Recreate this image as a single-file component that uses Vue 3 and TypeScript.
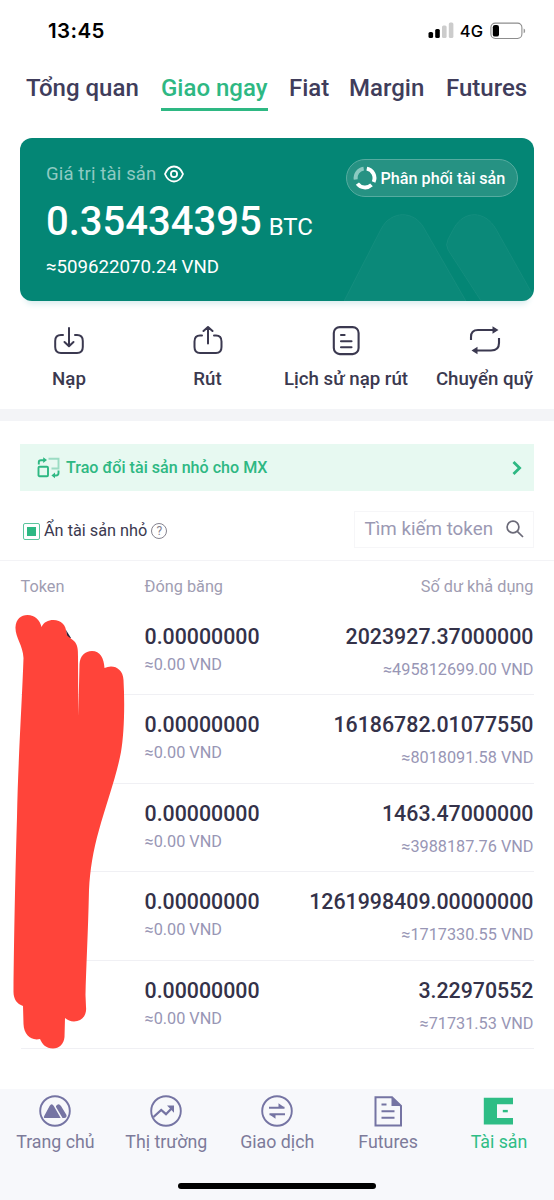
<script setup lang="ts">
interface Tab { label: string; cls: string; active?: boolean }
interface Holding { frozen: string; frozenFiat: string; available: string; availableFiat: string }

const tabs: Tab[] = [
  { label: 'Tổng quan', cls: 't1' },
  { label: 'Giao ngay', cls: 't2', active: true },
  { label: 'Fiat', cls: 't3' },
  { label: 'Margin', cls: 't4' },
  { label: 'Futures', cls: 't5' },
]

const holdings: Holding[] = [
  { frozen: '0.00000000', frozenFiat: '≈0.00 VND', available: '2023927.37000000', availableFiat: '≈495812699.00 VND' },
  { frozen: '0.00000000', frozenFiat: '≈0.00 VND', available: '16186782.01077550', availableFiat: '≈8018091.58 VND' },
  { frozen: '0.00000000', frozenFiat: '≈0.00 VND', available: '1463.47000000', availableFiat: '≈3988187.76 VND' },
  { frozen: '0.00000000', frozenFiat: '≈0.00 VND', available: '1261998409.00000000', availableFiat: '≈1717330.55 VND' },
  { frozen: '0.00000000', frozenFiat: '≈0.00 VND', available: '3.22970552', availableFiat: '≈71731.53 VND' },
]
</script>

<template>
  <main class="screen">
    <header class="status">
      <span class="time">13:45</span>
      <div class="status-right">
        <svg class="signal" width="26" height="17" viewBox="0 0 26 17">
          <rect x="0.5" y="10" width="4.6" height="6" rx="1.6" fill="#000" />
          <rect x="7.2" y="7" width="4.6" height="9" rx="1.5" fill="#000" />
          <rect x="14" y="3.6" width="4.6" height="12.4" rx="1.5" fill="#ccc" />
          <rect x="20.8" y="0.5" width="4.6" height="15.5" rx="1.5" fill="#ccc" />
        </svg>
        <span class="network">4G</span>
        <svg class="battery" width="36" height="18" viewBox="0 0 36 18">
          <rect x="0.9" y="1.1" width="31" height="15.4" rx="4.4" fill="none" stroke="#8d8d8d" stroke-width="1.1" />
          <rect x="2.8" y="3" width="6.2" height="11.6" rx="2.2" fill="#000" />
          <path d="M33.6 6.6v4.6q1.6-.5 1.6-2.3t-1.6-2.3z" fill="#999" />
        </svg>
      </div>
    </header>

    <nav class="tabs">
      <span v-for="tab in tabs" :key="tab.label" class="tab" :class="[tab.cls, { active: tab.active }]">{{ tab.label }}</span>
    </nav>

    <section class="card">
      <svg class="card-art" width="190" height="90" viewBox="0 0 190 90">
        <path d="M0 90 L37 18 C47 -1 70 -1 80 17 L122 90 Z" fill="#fff" fill-opacity=".03" stroke="#fff" stroke-opacity=".05" />
        <path d="M137 90 L104 39 Q101 34 104 28 L110 17 C120 -1 141 -1 152 18 L189 84 L186 90 Z" fill="#fff" fill-opacity=".03" stroke="#fff" stroke-opacity=".05" />
      </svg>
      <div class="card-info">
        <div class="card-label">
          <span>Giá trị tài sản</span>
          <svg width="20" height="18" viewBox="0 0 20 18" fill="none" stroke="#fff" stroke-width="1.8">
            <path d="M1 9C3 4 6.300 1.500 10 1.500S17 4 19 9C17 14 13.700 16.500 10 16.500S3 14 1 9Z" stroke-linejoin="round" />
            <circle cx="10" cy="9" r="3.100" />
          </svg>
        </div>
        <div class="balance"><span class="amount">0.35434395</span><span class="unit">BTC</span></div>
        <div class="fiat">≈509622070.24 VND</div>
      </div>
      <div class="distribution">
        <svg width="24" height="24" viewBox="0 0 24 24" fill="none" stroke-width="3.900">
          <path d="M13.800 2.700A9.500 9.500 0 0 1 20.600 16" stroke="#fff" />
          <path d="M18.500 18.900A9.500 9.500 0 0 1 4.400 17.600" stroke="#fff" />
          <path d="M2.700 13.500A9.500 9.500 0 0 1 10.700 2.600" stroke="#8bcac1" />
        </svg>
        <span>Phân phối tài sản</span>
      </div>
    </section>

    <section class="actions">
      <div class="action a1">
        <svg width="32" height="32" viewBox="0 0 32 32" fill="none" stroke="#3b3950" stroke-width="2" stroke-linecap="round" stroke-linejoin="round">
          <path d="M10 9H8Q2.200 9 2.200 15V21Q2.200 27 8 27H24Q29.800 27 29.800 21V15Q29.800 9 24 9H22M16 2V20M11.500 16L16 20.200L20.500 16" />
        </svg>
        <span>Nạp</span>
      </div>
      <div class="action a2">
        <svg width="32" height="32" viewBox="0 0 32 32" fill="none" stroke="#3b3950" stroke-width="2" stroke-linecap="round" stroke-linejoin="round">
          <path d="M10 9.500H8Q2.500 9.500 2.500 15.500V21Q2.500 27 8 27H24Q29.500 27 29.500 21V15.500Q29.500 9.500 24 9.500H22M16 17.500V1M11.500 5L16 1L20.500 5" />
        </svg>
        <span>Rút</span>
      </div>
      <div class="action a3">
        <svg width="32" height="32" viewBox="0 0 32 32" fill="none" stroke="#3b3950" stroke-width="2.100" stroke-linecap="round">
          <rect x="3.800" y="1.100" width="24.800" height="27" rx="6" />
          <path d="M11 9H14.600M11 15.200H21.500M11 21.200H21.500" />
        </svg>
        <span>Lịch sử nạp rút</span>
      </div>
      <div class="action a4">
        <svg width="32" height="32" viewBox="0 0 32 32" fill="none" stroke="#3b3950" stroke-width="2.100">
          <path d="M2 14V11Q2 4 9 4H24M30 12V17Q30 24.500 22 24.500H8" />
          <path d="M23.500 .300L29.500 4L23.500 7.700ZM8.500 20.800L2.500 24.500L8.500 28.200Z" fill="#3b3950" stroke="none" />
        </svg>
        <span>Chuyển quỹ</span>
      </div>
    </section>

    <section class="body">
      <div class="promo">
        <svg width="24" height="22" viewBox="0 0 24 22" fill="none" stroke="#2eb883" stroke-width="1.900">
          <rect x="1.500" y="9.700" width="9.500" height="9.500" rx="1" />
          <path d="M11.500 1.800H21.500V11.500H14.500" stroke="#9bdcc3" />
          <path d="M1.800 7.500V5Q1.800 3.200 4 3.200H7M21.500 13.500V16Q21.500 18.500 19 18.500H17.500" />
          <path d="M6.200 .300L10 3.100L6.200 6ZM18 15.600L14.400 18.400L18 21.200Z" fill="#2eb883" stroke="none" />
        </svg>
        <span class="promo-text">Trao đổi tài sản nhỏ cho MX</span>
        <svg class="chevron" width="12" height="16" viewBox="0 0 12 16" fill="none" stroke="#2eb883" stroke-width="2.800">
          <path d="M2.500 2L8.600 8L2.500 14" />
        </svg>
      </div>

      <div class="filters">
        <div class="hide-small">
          <span class="checkbox"></span>
          <span class="hide-label">Ẩn tài sản nhỏ</span>
          <span class="help">?</span>
        </div>
        <div class="search">
          <span>Tìm kiếm token</span>
          <svg width="18" height="18" viewBox="0 0 18 18" fill="none" stroke="#6b6a78" stroke-width="1.700">
            <circle cx="7" cy="7" r="5.900" />
            <path d="M11.300 11.300L17 17" />
          </svg>
        </div>
      </div>
    </section>

    <section class="table">
      <div class="grid head">
        <span>Token</span>
        <span>Đóng băng</span>
        <span class="right">Số dư khả dụng</span>
      </div>
      <div v-for="(row, i) in holdings" :key="i" class="grid row">
        <span></span>
        <div>
          <div class="value">{{ row.frozen }}</div>
          <div class="sub">{{ row.frozenFiat }}</div>
        </div>
        <div class="right">
          <div class="value">{{ row.available }}</div>
          <div class="sub low">{{ row.availableFiat }}</div>
        </div>
      </div>
      <svg class="scribble" width="130" height="440" viewBox="0 610 130 440">
        <path d="M66 630L71 638L67 639Z" fill="#26243c" />
        <path
          fill="#ff443a"
          d="M15.500 627C16 619 21 615 27.500 615C35 615 40 620 41.500 627C44 622 48 620 53.500 620C61 620 66 625 66.500 633C67 637 70 637 74 641C78 645 78 650 78 657L78.300 716L79.500 664C80 656 85 651 92 651C100 651 104 658 104.500 668C113 664 123 668 123.500 680C125 706 124 735 121 752C117 774 106 805 99 830C93 851 90 870 89 890C88 935 86 970 85.500 995L86 1007C87 1015 82 1021.500 74 1021.500C70 1021.500 68 1020 65 1018L64.500 1037C64 1044 59 1048.500 53 1048.500C46 1048.500 42 1044 40 1039C31 1041 24 1035 23.500 1024L23 1006C17 1004 13.500 999 13.500 992C14 936 15.500 866 17 817C18 762 22 702 23.500 658C23 645 15 637 15.500 627Z"
        />
      </svg>
    </section>

    <footer class="bottom">
      <div class="items">
        <div class="item">
          <svg width="34" height="34" viewBox="0 0 34 34">
            <circle cx="17" cy="17" r="14.800" fill="none" stroke="#7574a3" stroke-width="1.900" />
            <path d="M7 24Q5.200 24 6.200 22L11.600 12Q13.700 8.500 15.800 12L22.700 24ZM18 12Q20.500 8.500 23 12L28.500 21Q29 24 26.200 24H24.500L18 13Z" fill="#7574a3" />
          </svg>
          <span>Trang chủ</span>
        </div>
        <div class="item">
          <svg width="34" height="34" viewBox="0 0 34 34" fill="none" stroke="#7574a3">
            <circle cx="17" cy="17" r="14.800" stroke-width="1.900" />
            <path d="M4.500 23L12.200 16L17 20.200L23 14" stroke-width="2.300" />
            <path d="M18 11.500H25V18.800Z" fill="#7574a3" stroke="none" />
          </svg>
          <span>Thị trường</span>
        </div>
        <div class="item">
          <svg width="34" height="34" viewBox="0 0 34 34" fill="none" stroke="#7574a3" stroke-width="1.900">
            <circle cx="17" cy="17" r="14.800" />
            <path d="M9 13.700H24.500M9.500 20.300H25" />
            <path d="M18.500 9.300V13.500H24.500ZM15.500 24.700V20.500H9.500Z" fill="#7574a3" stroke="none" />
          </svg>
          <span>Giao dịch</span>
        </div>
        <div class="item">
          <svg width="34" height="34" viewBox="0 0 34 34" fill="none" stroke="#7574a3" stroke-width="2">
            <path d="M4.500 3.200H21L30 12V31.500H4.500Z" />
            <path d="M20.500 3V12H30Z" fill="#7574a3" stroke="none" />
            <path d="M10.500 10.500H15.500M10.500 17.200H23.500M10.500 23.700H23.500" />
          </svg>
          <span>Futures</span>
        </div>
        <div class="item on">
          <svg width="34" height="34" viewBox="0 0 34 34" fill="#2ebd85">
            <path d="M1.800 3.800H31V10.300H15V23.900H31V30.500H1.800Z" />
            <rect x="20.800" y="15.900" width="5" height="2.400" />
          </svg>
          <span>Tài sản</span>
        </div>
      </div>
      <div class="home-bar"></div>
    </footer>
  </main>
</template>

<style>
body { margin: 0; background: #fff; }
</style>

<style scoped>
* { box-sizing: border-box; }
.screen { width: 554px; height: 1200px; background: #fff; font-family: Roboto, "Noto Sans", sans-serif; color: #3b394f; display: flex; flex-direction: column; overflow: hidden; white-space: nowrap; }
svg { display: block; flex: none; }
.status { height: 61px; flex: none; display: flex; justify-content: space-between; padding: 0 28px 0 48px; align-items: center; color: #000; }
.time { font: 600 20.500px/24px Inter, sans-serif; letter-spacing: .4px; }
.status-right { display: flex; align-items: center; }
.network { font: 500 16.500px/20px Inter, sans-serif; margin: 0 7px 0 6px; }
.tabs { height: 77px; flex: none; padding: 12px 0 0 26px; display: flex; align-items: flex-start; font-weight: 500; font-size: 24px; line-height: 30px; color: #403d5b; }
.tab { height: 37px; flex: none; }
.t1 { width: 135px; }
.t2 { width: 107px; margin-right: 21px; }
.t3 { width: 60px; }
.t4 { width: 97px; }
.tab.active { color: #2eb883; border-bottom: 3px solid #2eb883; height: 38px; }
.card { position: relative; margin: 0 20px; width: 513.500px; height: 163px; flex: none; border-radius: 12px; background: #048675; color: #fff; box-shadow: 0 8px 6px -5px #d9ecee; display: flex; justify-content: space-between; align-items: flex-start; padding: 21px 16px 0 26px; }
.card-art { position: absolute; right: 0; bottom: 0; border-radius: 0 0 12px 0; }
.card-label { display: flex; align-items: center; gap: 8px; height: 29px; font-size: 18.500px; letter-spacing: .15px; color: #8fcac2; }
.balance { height: 66px; display: flex; align-items: baseline; line-height: 67px; }
.amount { font-size: 40px; font-weight: 500; }
.unit { font-size: 24px; margin-left: 7px; }
.fiat { font-size: 18.700px; line-height: 26px; }
.distribution { position: relative; width: 172px; height: 38px; border-radius: 19px; border: 1px solid #56aca0; background: #269283; display: flex; align-items: center; padding-left: 6px; gap: 4px; font-size: 16.200px; font-weight: 500; }
.actions { height: 120px; flex: none; border-bottom: 12px solid #f3f4f7; padding-top: 25px; display: flex; font-size: 18.700px; font-weight: 500; }
.action { display: flex; flex-direction: column; align-items: center; gap: 8px; line-height: 26px; }
.a1 { width: 138px; }
.a2 { width: 139px; }
.a3 { width: 138px; }
.a4 { width: 139px; }
.body { height: 140px; flex: none; padding: 23px 20.500px 0 20px; border-bottom: 1px solid #f3f3f6; }
.promo { height: 47px; background: #e7f9f1; display: flex; align-items: center; padding: 0 11px 0 17px; color: #2eb883; font-size: 16.100px; font-weight: 500; }
.promo-text { margin-left: 5px; }
.chevron { margin-left: auto; }
.filters { display: flex; justify-content: space-between; margin-top: 19px; align-items: center; height: 38px; }
.hide-small { display: flex; align-items: center; padding: 4px 0 0 3px; }
.checkbox { width: 17px; height: 17px; border: 1.500px solid #5cc59d; border-radius: 2px; padding: 3px; background: #2eb883 content-box; }
.hide-label { font-size: 16.300px; margin-left: 4px; line-height: 24px; }
.help { width: 16px; height: 16px; border: 1px solid #85838f; border-radius: 50%; margin-left: 4px; text-align: center; font-size: 12px; line-height: 14px; color: #85838f; }
.search { width: 180px; height: 37px; border: 1px solid #f6f6f8; display: flex; align-items: center; justify-content: space-between; padding: 0 9px 0 10px; font-size: 18.800px; letter-spacing: 0; color: #9b99b3; }
.table { position: relative; height: 528px; flex: none; }
.grid { display: grid; grid-template-columns: 124px 150px 1fr; margin: 0 20.500px; }
.right { text-align: right; }
.head { height: 46px; line-height: 51px; font-size: 16.300px; color: #9f9db2; }
.row { height: 88.400px; border-bottom: 1px solid #f0f0f4; padding-top: 17px; }
.value { font-weight: 500; font-size: 21.350px; line-height: 26px; color: #343249; }
.sub { font-size: 16.250px; line-height: 22px; color: #9896b5; margin-top: 4px; }
.low { margin-top: 9px; }
.scribble { position: absolute; left: 0; top: 49px; }
.bottom { height: 111px; flex: none; background: #f7f8fb; }
.items { display: grid; grid-template-columns: repeat(5, 110.900px); padding-top: 5px; height: 94px; }
.item { display: flex; flex-direction: column; align-items: center; gap: 1px; font-size: 17.800px; line-height: 26px; color: #7d7b9a; }
.on { color: #2ebd85; }
.home-bar { width: 198px; height: 6px; border-radius: 3px; background: #000; margin-left: 178px; }
</style>
